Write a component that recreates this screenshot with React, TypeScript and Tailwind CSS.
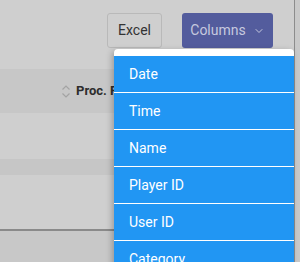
import { ChevronDown } from "lucide-react"

const columns = ["Date", "Time", "Name", "Player ID", "User ID", "Category"]

const SortIcon = () => (
  <svg width="10" height="15" viewBox="0 0 10 15" fill="none" stroke="#a3a3a3" strokeWidth="1.2">
    <path d="M1.5 5.5 L5 2 L8.5 5.5" />
    <path d="M1.5 9.5 L5 13 L8.5 9.5" />
  </svg>
)

const App = () => {
  return (
    <div
      className="relative w-[300px] h-[262px] overflow-hidden flex bg-[#c9c9c9]"
      style={{ fontFamily: "Roboto, 'Liberation Sans', sans-serif" }}
    >
      {/* page under the backdrop */}
      <div className="w-[295px] shrink-0 flex flex-col border-r border-[#8c8c8c] bg-[#cfcfcf]">
        <div className="h-[69px] shrink-0 flex justify-end items-start pt-[13px] pr-[21px] gap-[20px]">
          <button className="h-[35px] w-[55px] rounded-[3px] border border-[#b9b9b9] text-[14px] text-[#333]">
            Excel
          </button>
          <button className="h-[35px] w-[91px] rounded-[3px] bg-[#535c9d] text-[14px] text-[#c6c9df] flex items-center justify-center gap-[7px]">
            Columns
            <ChevronDown size={12} strokeWidth={2} className="text-[#c6c9df]" />
          </button>
        </div>

        {/* table header */}
        <div className="h-[44px] shrink-0 bg-[#c7c7c7] flex items-center pl-[61px] gap-[5px]">
          <SortIcon />
          <span className="text-[13px] font-bold text-[#2d2d2d] whitespace-nowrap">Proc. Fee</span>
        </div>

        <div className="h-[46px] shrink-0" />
        <div className="h-[16px] shrink-0 bg-[#c6c6c6]" />
        <div className="h-[56px] shrink-0 border-b-2 border-[#8a8a8a]" />
        <div className="flex-1 bg-[#c8c8c8]" />
      </div>
      <div className="flex-1 bg-[#c9c9c9]" />

      {/* columns menu */}
      <div className="absolute left-[114px] top-[49px] w-[180px] rounded-t-[4px] bg-white pt-[7px] shadow-[-2px_2px_6px_rgba(0,0,0,0.25)]">
        {columns.map((c) => (
          <div
            key={c}
            className="h-[37px] flex items-center pl-[15px] bg-[#2196f3] border-b border-white text-[14px] text-white"
          >
            {c}
          </div>
        ))}
      </div>
    </div>
  )
}

export default App
